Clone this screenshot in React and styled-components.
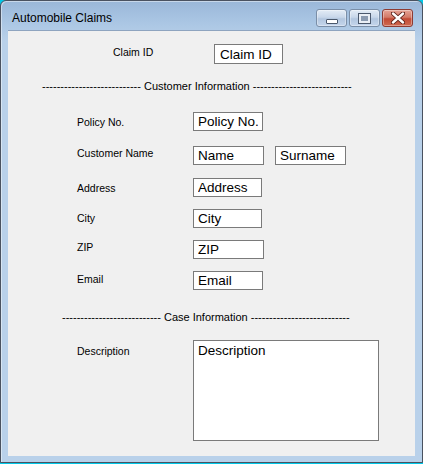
import React from 'react'
import styled, { createGlobalStyle } from 'styled-components'

const GlobalStyle = createGlobalStyle`
  html, body {
    margin: 0;
    padding: 0;
    background: #00c8e8;
  }
  body {
    font-family: "Liberation Sans", Arial, sans-serif;
  }
`

const Window = styled.div`
  width: 423px;
  height: 463px;
  box-sizing: border-box;
  border: 1px solid #4a5260;
  border-radius: 6px 6px 0 0;
  background: linear-gradient(to bottom, #9ab7d8 0px, #a9c5e3 20px, #b9d1ea 40px, #b9d1ea 100%);
  display: flex;
  flex-direction: column;
  padding: 0 7px 6px 7px;
  box-shadow: inset 1px 1px 0 rgba(255, 255, 255, 0.45);
`

const TitleBar = styled.div`
  height: 29px;
  display: flex;
  align-items: flex-start;
  justify-content: space-between;
`

const Title = styled.div`
  padding: 10px 0 0 4px;
  font-size: 12px;
  line-height: 14px;
  color: #000;
`

const Buttons = styled.div`
  display: flex;
  gap: 2px;
  margin-top: 8px;
  margin-right: 2px;
`

const CaptionButton = styled.div`
  width: ${(p) => p.$w}px;
  height: 18px;
  box-sizing: border-box;
  border: 1px solid ${(p) => (p.$close ? '#8d3b33' : '#7a8ea7')};
  border-radius: 3px;
  background: ${(p) =>
    p.$close
      ? 'linear-gradient(to bottom, #e6a496 0%, #d37a68 45%, #c24a35 55%, #cf6a52 100%)'
      : 'linear-gradient(to bottom, #e3ecf6 0%, #c8d7ea 45%, #b2c6df 55%, #c5d6ec 100%)'};
  box-shadow: inset 0 0 0 1px rgba(255, 255, 255, 0.35);
  display: flex;
  align-items: center;
  justify-content: center;
`

const MinGlyph = styled.div`
  width: 10px;
  height: 3px;
  margin-top: 6px;
  background: #fff;
  border: 1px solid #4a586c;
  border-radius: 1px;
`

const MaxGlyph = styled.div`
  width: 7px;
  height: 5px;
  border: 2px solid #e9eef5;
  outline: 1px solid #4a586c;
  background: #8a9ab0;
  box-sizing: content-box;
  margin: 1px;
`

const Client = styled.div`
  flex: 1;
  background: #f0f0f0;
  border: 1px solid #8ea4bf;
  border-width: 1px 0 0 0;
  box-sizing: border-box;
  display: flex;
  flex-direction: column;
  padding-top: 13px;
`

const ClaimRow = styled.div`
  display: flex;
  align-items: center;
  padding-left: 105px;
`

const Row = styled.div`
  display: flex;
  align-items: ${(p) => (p.$top ? 'flex-start' : 'center')};
  gap: 11px;
  padding-left: 69px;
  margin-top: ${(p) => p.$mt}px;
`

const Label = styled.div`
  width: ${(p) => p.$w || 116}px;
  flex: none;
  font-size: 10.5px;
  color: #000;
  margin-top: ${(p) => p.$shift || 0}px;
  margin-right: ${(p) => (p.$w ? 0 : -11)}px;
`

const Field = styled.input`
  width: ${(p) => p.$w}px;
  height: ${(p) => p.$h || 19}px;
  box-sizing: border-box;
  border: 1px solid #7a7a7a;
  background: #fff;
  padding: 0 0 0 4px;
  margin: 0;
  font-family: "Liberation Sans", Arial, sans-serif;
  font-size: 13.5px;
  color: #000;
  outline: none;
`

const Area = styled.textarea`
  width: 186px;
  height: 101px;
  box-sizing: border-box;
  border: 1px solid #7a7a7a;
  background: #fff;
  padding: 2px 0 0 4px;
  margin: 0;
  font-family: "Liberation Sans", Arial, sans-serif;
  font-size: 13.5px;
  line-height: 16px;
  color: #000;
  resize: none;
  overflow: hidden;
  outline: none;
`

const Divider = styled.div`
  font-size: 11px;
  line-height: 14px;
  white-space: nowrap;
  color: #000;
  padding-left: ${(p) => p.$left}px;
  margin-top: ${(p) => p.$mt}px;
`

const dashes = '-'.repeat(27)

export default function App() {
  return (
    <>
      <GlobalStyle />
      <Window>
        <TitleBar>
          <Title>Automobile Claims</Title>
          <Buttons>
            <CaptionButton $w={31}>
              <MinGlyph />
            </CaptionButton>
            <CaptionButton $w={31}>
              <MaxGlyph />
            </CaptionButton>
            <CaptionButton $w={31} $close>
              <svg width="14" height="12" viewBox="0 0 14 12">
                <path
                  d="M2 1.5 L12 10.5 M12 1.5 L2 10.5"
                  stroke="#5a1e16"
                  strokeWidth="4.2"
                  strokeLinecap="round"
                />
                <path
                  d="M2 1.5 L12 10.5 M12 1.5 L2 10.5"
                  stroke="#fff"
                  strokeWidth="2.4"
                  strokeLinecap="round"
                />
              </svg>
            </CaptionButton>
          </Buttons>
        </TitleBar>
        <Client>
          <ClaimRow>
            <Label $w={101} $shift={-4}>Claim ID</Label>
            <Field $w={69} $h={20} defaultValue="Claim ID" style={{ paddingLeft: 5 }} />
          </ClaimRow>

          <Divider $left={34} $mt={15}>
            {dashes} Customer Information {dashes}
          </Divider>

          <Row $mt={19}>
            <Label>Policy No.</Label>
            <Field $w={70} defaultValue="Policy No." />
          </Row>
          <Row $mt={15}>
            <Label $shift={-5}>Customer Name</Label>
            <Field $w={71} defaultValue="Name" />
            <Field $w={71} defaultValue="Surname" />
          </Row>
          <Row $mt={13}>
            <Label>Address</Label>
            <Field $w={69} defaultValue="Address" />
          </Row>
          <Row $mt={12}>
            <Label $shift={-1}>City</Label>
            <Field $w={69} defaultValue="City" />
          </Row>
          <Row $mt={12}>
            <Label $shift={-6}>ZIP</Label>
            <Field $w={71} defaultValue="ZIP" />
          </Row>
          <Row $mt={12}>
            <Label $shift={-3}>Email</Label>
            <Field $w={70} defaultValue="Email" />
          </Row>

          <Divider $left={54} $mt={20}>
            {dashes} Case Information {dashes}
          </Divider>

          <Row $mt={16} $top>
            <Label $shift={5}>Description</Label>
            <Area defaultValue="Description" />
          </Row>
        </Client>
      </Window>
    </>
  )
}
